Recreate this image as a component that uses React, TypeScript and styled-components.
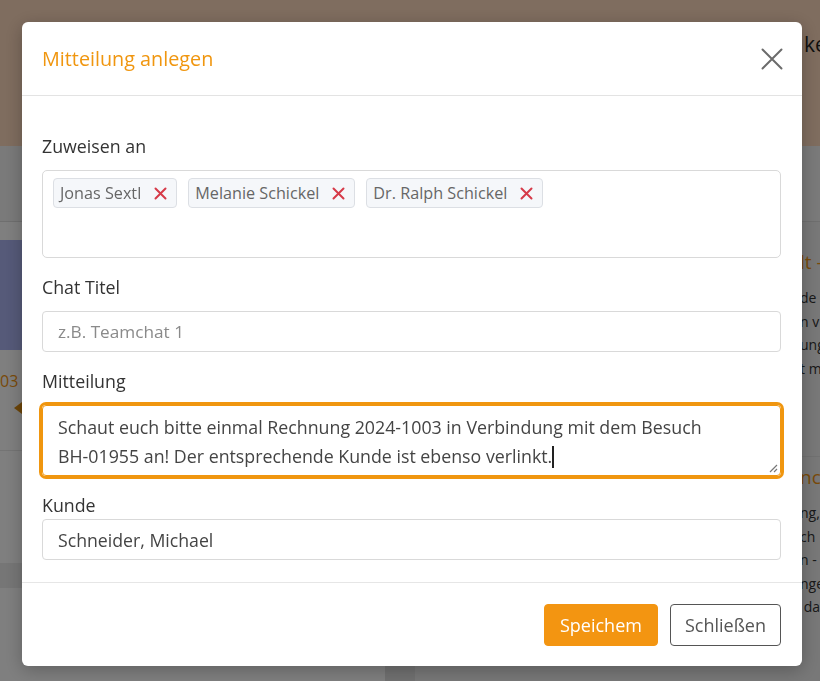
import React from "react";
import styled, { createGlobalStyle } from "styled-components";

const GlobalStyle = createGlobalStyle`
  html, body { margin: 0; padding: 0; }
  body {
    font-family: "Open Sans", "Noto Sans", "Liberation Sans", sans-serif;
    background: #ffffff;
    overflow: hidden;
  }
  * { box-sizing: border-box; }
`;

/* ---------- background page ---------- */

const Page = styled.div`
  width: 820px;
  height: 681px;
  display: flex;
  flex-direction: column;
  background: #ffffff;
  overflow: hidden;
`;

const TopBand = styled.header`
  height: 146px;
  flex: none;
  background: #fedabe;
  display: flex;
  align-items: flex-start;
  padding: 30px 0 0 804px;
`;

const TopTitle = styled.span`
  font-size: 21px;
  color: #222;
  white-space: nowrap;
`;

const Toolbar = styled.div`
  height: 76px;
  flex: none;
  background: #f4f4f4;
  border-bottom: 1px solid #dedede;
`;

const Columns = styled.div`
  flex: 1;
  display: grid;
  grid-template-columns: 415px 1fr;
  min-height: 0;
`;

const LeftCol = styled.div`
  display: flex;
  flex-direction: column;
  padding-top: 18px;
  background: #ffffff;
  border-right: 30px solid #e2e2e2;
`;

const NavyCard = styled.div`
  height: 110px;
  background: #acb4f2;
`;

const StepLabel = styled.div`
  margin-top: 20px;
  font-size: 16px;
  color: #f39511;
  height: 22px;
  line-height: 22px;
`;

const StepArrow = styled.div`
  margin: 10px 0 0 14px;
  width: 0;
  height: 0;
  border-top: 6px solid transparent;
  border-bottom: 6px solid transparent;
  border-right: 8px solid #d98a10;
`;

const Divider = styled.div<{ $top: number; $h?: number; $c?: string }>`
  margin-top: ${(p) => p.$top}px;
  height: ${(p) => p.$h ?? 1}px;
  background: ${(p) => p.$c ?? "#e8e8e8"};
`;

const RightCol = styled.div`
  display: flex;
  flex-direction: column;
  padding: 20px 0 0 385px;
  background: #f0f0f0;
`;

const InfoCard = styled.div`
  display: flex;
  flex-direction: column;
  padding-top: 6px;
  white-space: nowrap;
  overflow: hidden;
`;

const InfoTitle = styled.div`
  font-size: 19px;
  color: #f39511;
  line-height: 28px;
  margin-bottom: 10px;
`;

const InfoLine = styled.div`
  font-size: 14px;
  color: #333;
  line-height: 23.5px;
`;

/* ---------- modal ---------- */

const Backdrop = styled.div`
  position: fixed;
  inset: 0;
  background: rgba(0, 0, 0, 0.5);
  padding: 22px;
  display: flex;
  justify-content: flex-start;
  align-items: flex-start;
`;

const Modal = styled.div`
  flex: none;
  width: 780px;
  background: #ffffff;
  border-radius: 6px;
  box-shadow: 0 4px 18px rgba(0, 0, 0, 0.25);
  display: flex;
  flex-direction: column;
`;

const ModalHeader = styled.div`
  height: 74px;
  padding: 0 20px;
  display: flex;
  align-items: center;
  justify-content: space-between;
  border-bottom: 1px solid #e3e3e3;
`;

const ModalTitle = styled.h2`
  margin: 0;
  font-size: 19.8px;
  font-weight: 400;
  color: #f0960f;
`;

const CloseButton = styled.button`
  border: none;
  background: none;
  padding: 0;
  width: 24px;
  height: 24px;
  margin-right: -2px;
  display: flex;
  align-items: center;
  justify-content: center;
  cursor: pointer;
`;

const ModalBody = styled.div`
  padding: 38px 21px 22px 20px;
  display: flex;
  flex-direction: column;
  border-bottom: 1px solid #e6e6e6;
`;

const Group = styled.div`
  display: flex;
  flex-direction: column;
  margin-bottom: 17px;
  &:last-child { margin-bottom: 0; }
`;

const Label = styled.label<{ $tight?: boolean }>`
  font-size: 17.8px;
  line-height: 24px;
  color: #333;
  margin-bottom: ${(p) => (p.$tight ? 2 : 12)}px;
`;

const TagBox = styled.div`
  height: 88px;
  border: 1px solid #d9d9d9;
  border-radius: 5px;
  padding: 7px 10px;
  display: flex;
  align-items: flex-start;
  gap: 11px;
`;

const Tag = styled.span`
  height: 30px;
  display: inline-flex;
  align-items: center;
  gap: 13px;
  padding: 0 9px 0 6px;
  background: #f5f7fa;
  border: 1px solid #dcdfe4;
  border-radius: 4px;
  font-size: 16.2px;
  color: #666;
  white-space: nowrap;
`;

const Input = styled.div<{ $muted?: boolean }>`
  height: 41px;
  border: 1px solid #d9d9d9;
  border-radius: 4px;
  padding: 0 15px;
  display: flex;
  align-items: center;
  font-size: ${(p) => (p.$muted ? 17.2 : 17.7)}px;
  color: ${(p) => (p.$muted ? "#8a8a8a" : "#444")};
`;

const TextArea = styled.div`
  position: relative;
  height: 71px;
  border: 1px solid #f0960f;
  box-shadow: 0 0 0 3px #f0960f;
  border-radius: 4px;
  padding: 7px 15px;
  font-size: 17.8px;
  line-height: 29px;
  color: #444;
  white-space: nowrap;
`;

const Caret = styled.span`
  display: inline-block;
  width: 1.5px;
  height: 22px;
  background: #222;
  vertical-align: -5px;
`;

const ResizeHandle = styled.svg`
  position: absolute;
  right: 2px;
  bottom: 2px;
`;

const ModalFooter = styled.div`
  height: 83px;
  padding: 0 21px 0 20px;
  display: flex;
  align-items: center;
  justify-content: flex-end;
  gap: 12px;
`;

const Button = styled.button<{ $primary?: boolean }>`
  height: 42px;
  padding: 0 ${(p) => (p.$primary ? 15 : 14)}px;
  border-radius: 4px;
  font-family: inherit;
  font-size: 18px;
  cursor: pointer;
  border: 1px solid ${(p) => (p.$primary ? "#f39511" : "#555")};
  background: ${(p) => (p.$primary ? "#f39511" : "#fff")};
  color: ${(p) => (p.$primary ? "#fff" : "#555")};
`;

const RemoveIcon = () => (
  <svg width="13" height="13" viewBox="0 0 13 13">
    <path d="M1.5 1.5 L11.5 11.5 M11.5 1.5 L1.5 11.5" stroke="#d63a48" strokeWidth="2" strokeLinecap="round" />
  </svg>
);

const tags = ["Jonas Sextl", "Melanie Schickel", "Dr. Ralph Schickel"];

export default function App() {
  return (
    <>
      <GlobalStyle />
      <Page>
        <TopBand>
          <TopTitle>ke</TopTitle>
        </TopBand>
        <Toolbar />
        <Columns>
          <LeftCol>
            <NavyCard />
            <StepLabel>03</StepLabel>
            <StepArrow />
            <Divider $top={36} />
            <Divider $top={112} $h={25} $c="#ededed" />
          </LeftCol>
          <RightCol>
            <InfoCard>
              <InfoTitle>lt -</InfoTitle>
              <InfoLine>de</InfoLine>
              <InfoLine>n v</InfoLine>
              <InfoLine>ung</InfoLine>
              <InfoLine>t m</InfoLine>
            </InfoCard>
            <Divider $top={76} $c="#e2e2e2" />
            <InfoCard>
              <InfoTitle>nc</InfoTitle>
              <InfoLine>ng,</InfoLine>
              <InfoLine>ch</InfoLine>
              <InfoLine>n -</InfoLine>
              <InfoLine>nge</InfoLine>
              <InfoLine>&nbsp;da</InfoLine>
            </InfoCard>
          </RightCol>
        </Columns>
      </Page>

      <Backdrop>
        <Modal role="dialog" aria-label="Mitteilung anlegen">
          <ModalHeader>
            <ModalTitle>Mitteilung anlegen</ModalTitle>
            <CloseButton aria-label="Schließen">
              <svg width="22" height="22" viewBox="0 0 22 22">
                <path d="M1.5 1.5 L20.5 20.5 M20.5 1.5 L1.5 20.5" stroke="#6b6b6b" strokeWidth="2" strokeLinecap="round" />
              </svg>
            </CloseButton>
          </ModalHeader>
          <ModalBody>
            <Group>
              <Label>Zuweisen an</Label>
              <TagBox>
                {tags.map((t) => (
                  <Tag key={t}>
                    {t}
                    <RemoveIcon />
                  </Tag>
                ))}
              </TagBox>
            </Group>
            <Group>
              <Label>Chat Titel</Label>
              <Input $muted>z.B. Teamchat 1</Input>
            </Group>
            <Group>
              <Label>Mitteilung</Label>
              <TextArea role="textbox">
                Schaut euch bitte einmal Rechnung 2024-1003 in Verbindung mit dem Besuch
                <br />
                BH-01955 an! Der entsprechende Kunde ist ebenso verlinkt.
                <Caret />
                <ResizeHandle width="10" height="10" viewBox="0 0 10 10">
                  <path d="M9 2 L2 9 M9 6 L6 9" stroke="#777" strokeWidth="1.2" />
                </ResizeHandle>
              </TextArea>
            </Group>
            <Group>
              <Label $tight>Kunde</Label>
              <Input>Schneider, Michael</Input>
            </Group>
          </ModalBody>
          <ModalFooter>
            <Button $primary>Speichem</Button>
            <Button>Schließen</Button>
          </ModalFooter>
        </Modal>
      </Backdrop>
    </>
  );
}
